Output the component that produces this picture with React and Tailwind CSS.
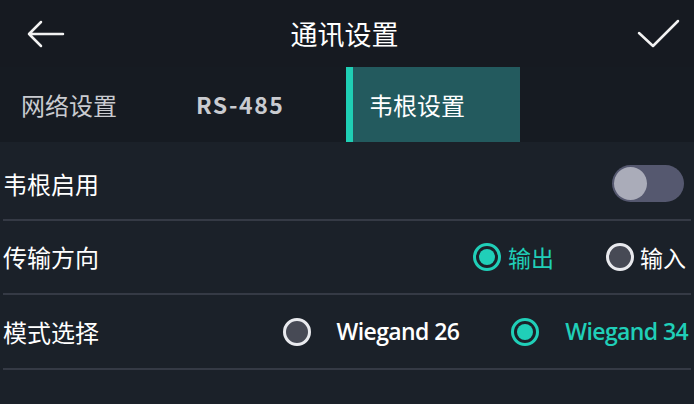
import React from "react";

const font = { fontFamily: '"Noto Sans CJK SC", "Noto Sans", sans-serif' };
const latin = { fontFamily: '"Open Sans", "Noto Sans", sans-serif' };

function Radio({ on, className = "" }) {
  return on ? (
    <span className={"flex h-[28px] w-[28px] shrink-0 items-center justify-center rounded-full border-[3px] border-[#20cfb8] " + className}>
      <span className="h-[16px] w-[16px] rounded-full bg-[#20cfb8]" />
    </span>
  ) : (
    <span className={"block h-[28px] w-[28px] shrink-0 rounded-full border-[3px] border-[#e9eaee] bg-[#474a55] " + className} />
  );
}

export default function App() {
  return (
    <div className="flex h-[404px] w-[694px] flex-col bg-[#1b2129] text-white" style={font}>
      <div className="flex h-[67px] items-center justify-between bg-[#161a21] pl-[26px] pr-[13px]">
        <svg width="40" height="30" viewBox="0 0 40 30" fill="none" stroke="#f2f2f2" strokeWidth="2.5" strokeLinecap="round" strokeLinejoin="round">
          <path d="M37 15H3M15 3L3 15L15 27" />
        </svg>
        <div className="pr-[14px] text-[27px] leading-none">通讯设置</div>
        <svg width="44" height="30" viewBox="0 0 44 30" fill="none" stroke="#f2f2f2" strokeWidth="2.5" strokeLinecap="round" strokeLinejoin="round">
          <path d="M2 14L16 27L41 2" />
        </svg>
      </div>
      <div className="flex h-[75px] items-stretch bg-[#161b22]">
        <div className="flex w-[175px] items-center pl-[21px] text-[24px] text-[#c9cbd0]">网络设置</div>
        <div className="flex w-[171px] items-center pl-[21px] text-[23px] font-bold tracking-[1.5px] text-[#c9cbd0]">RS-485</div>
        <div className="flex w-[174px] items-center border-l-[7px] border-[#1fcfb5] bg-[#235a5e] pl-[16px] text-[24px] text-white">韦根设置</div>
      </div>
      <div className="flex flex-col px-[3px]">
        <div className="flex h-[79px] items-center justify-between border-b-2 border-[#353a45] pr-[7px] pt-[6px]">
          <span className="text-[24px]">韦根启用</span>
          <span className="flex h-[37px] w-[72px] items-center rounded-full bg-[#55586f] pl-[2px]">
            <span className="h-[33px] w-[33px] rounded-full bg-[#aaacb9]" />
          </span>
        </div>
        <div className="flex h-[74px] items-center justify-between border-b-2 border-[#353a45] pr-[5px]">
          <span className="text-[24px]">传输方向</span>
          <div className="flex items-center">
            <Radio on />
            <span className="ml-[7px] text-[23px] text-[#20cfb8]">输出</span>
            <Radio className="ml-[52px]" />
            <span className="ml-[6px] text-[23px]">输入</span>
          </div>
        </div>
        <div className="flex h-[75px] items-center justify-between border-b-2 border-[#353a45]">
          <span className="text-[24px]">模式选择</span>
          <div className="flex items-center">
            <Radio />
            <span className="ml-[26px] text-[23px] font-semibold tracking-[-0.6px]" style={latin}>Wiegand 26</span>
            <Radio on className="ml-[52px]" />
            <span className="ml-[26px] mr-[3px] text-[23px] font-semibold tracking-[-0.6px] text-[#20cfb8]" style={latin}>Wiegand 34</span>
          </div>
        </div>
      </div>
    </div>
  );
}
